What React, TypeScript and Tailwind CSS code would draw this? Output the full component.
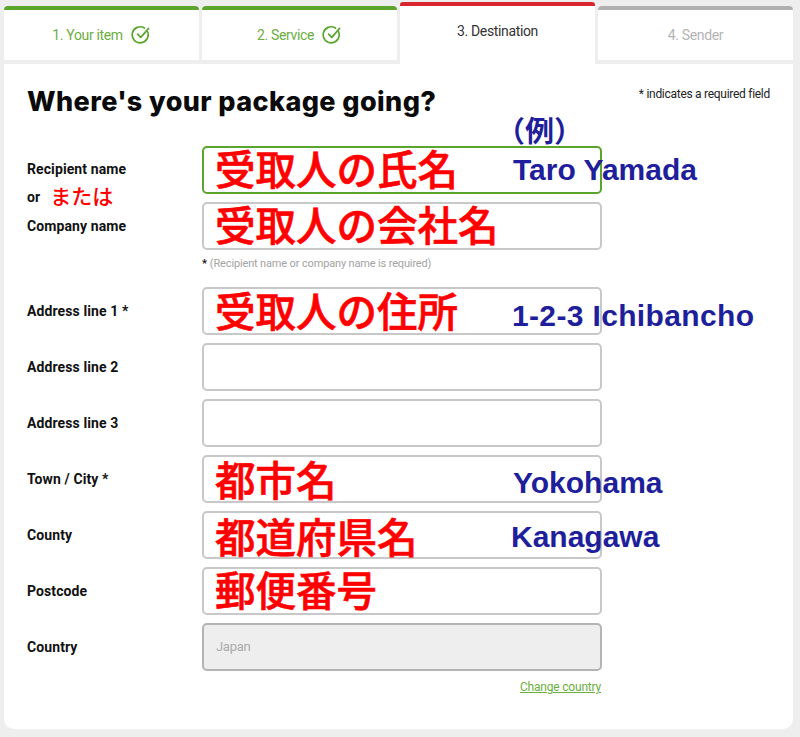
import { Fragment, ReactNode } from "react";

const din = "font-['Roboto','Liberation_Sans',sans-serif]";
const red = "font-['Noto_Sans_CJK_JP',sans-serif] font-medium [-webkit-text-stroke:0.6px_#ff0000] text-[40.5px] leading-[48px] text-[#ff0000] whitespace-nowrap";
const blue = "absolute font-['Liberation_Sans','Noto_Sans_CJK_JP',sans-serif] font-bold text-[#1f1f9c] whitespace-nowrap";

function Check() {
  return (
    <svg width="20" height="20" viewBox="0 0 20 20" fill="none" stroke="#5ba52e" strokeWidth="1.7" strokeLinecap="round" strokeLinejoin="round">
      <path d="M16.6 6.8A8 8 0 1 1 13.4 3" />
      <path d="M6.6 9.2l3.2 3.2 7.8-9" />
    </svg>
  );
}

const steps = [
  { label: "1. Your item", state: "done" },
  { label: "2. Service", state: "done" },
  { label: "3. Destination", state: "active" },
  { label: "4. Sender", state: "todo" },
];

function Tabs() {
  return (
    <div className={`flex gap-[3px] items-end h-[64px] pl-[4px] pr-[7px] ${din}`}>
      {steps.map((s) => {
        if (s.state === "active") {
          return (
            <div key={s.label} className="flex-1 h-[62px] pt-[16px] bg-white border-t-[4px] border-[#d9262e] rounded-t-[3px] text-center text-[14px] tracking-[-0.35px] leading-[18px] text-[#333]">
              {s.label}
            </div>
          );
        }
        const done = s.state === "done";
        return (
          <div key={s.label} className={`flex-1 h-[54px] mb-[4px] bg-white border-t-[4px] rounded-t-[4px] flex items-center justify-center gap-[8px] text-[14px] tracking-[-0.35px] ${done ? "border-[#5ba52e] text-[#6cae40]" : "border-[#b0b0b0] text-[#b4b4b4]"}`}>
            <span>{s.label}</span>
            {done && <Check />}
          </div>
        );
      })}
    </div>
  );
}

function Label({ children, className = "" }: { children: ReactNode; className?: string }) {
  return <div className={`text-[14px] leading-[18px] tracking-[0.1px] font-bold text-[#111] ${din} ${className}`}>{children}</div>;
}

function Box({ ja, en, focus, enClass = "", jaClass = "-mt-[4px]" }: { ja?: string; en?: string; focus?: boolean; enClass?: string; jaClass?: string }) {
  return (
    <div className={`relative w-[400px] h-[48px] bg-white border-2 rounded-[5px] pl-[11px] ${focus ? "border-[#5ba52e]" : "border-[#c8c8c8]"}`}>
      {ja && <div className={`${red} ${jaClass}`}>{ja}</div>}
      {en && <div className={`${blue} ${enClass}`}>{en}</div>}
    </div>
  );
}

const rows = [
  { label: "Address line 1 *", ja: "受取人の住所", jaClass: "-mt-[3px]", en: "1-2-3 Ichibancho", enClass: "left-[308px] top-[3px] text-[30px] tracking-[0.35px] leading-[48px]" },
  { label: "Address line 2" },
  { label: "Address line 3" },
  { label: "Town / City *", ja: "都市名", jaClass: "-mt-[2px]", en: "Yokohama", enClass: "left-[309px] top-[2px] text-[30px] leading-[48px]" },
  { label: "County", ja: "都道府県名", jaClass: "-mt-[1px]", en: "Kanagawa", enClass: "left-[307px] top-[0px] text-[30px] leading-[48px]" },
  { label: "Postcode", ja: "郵便番号", jaClass: "-mt-[4px]" },
];

export default function App() {
  return (
    <div className="w-[800px] h-[737px] bg-[#eeeeee] overflow-hidden">
      <Tabs />
      <div className="ml-[4px] w-[789px] h-[665px] bg-white rounded-b-[10px] pl-[23px] relative">
        <div className="flex justify-between pr-[23px] pt-[20px] h-[82px]">
          <h1 className="font-['Inter',sans-serif] font-extrabold text-[27px] tracking-[0.4px] leading-[36px] text-[#0a0a0a]">Where's your package going?</h1>
          <p className={`${din} text-[12px] tracking-[-0.28px] leading-[18px] mt-[1px] text-[#222]`}>* indicates a required field</p>
        </div>

        <div className="grid grid-cols-[175px_400px] gap-y-[8px]">
          <div className="row-span-2">
            <Label className="mt-[14px]">Recipient name</Label>
            <Label className="mt-[6px] flex items-center h-[26px]">
              <span>or</span>
              <span className="ml-[10px] -mt-[4px] tracking-normal font-['Noto_Sans_CJK_JP',sans-serif] font-medium text-[21px] text-[#ff0000]">または</span>
            </Label>
            <Label className="mt-[7px]">Company name</Label>
          </div>
          <div className="relative">
            <div className={`${blue} left-[294px] -top-[36px] text-[29px] leading-[38px] font-['Noto_Sans_CJK_JP',sans-serif]`}>（例）</div>
            <Box ja="受取人の氏名" en="Taro Yamada" focus enClass="left-[309px] top-[-2px] text-[30px] leading-[48px]" />
          </div>
          <Box ja="受取人の会社名" />

          <div />
          <p className={`${din} text-[11px] tracking-[-0.15px] leading-[14px] -mt-[1px] h-[22px] text-[#a3a3a3]`}>
            <b className="text-[#111] mr-[3px]">*</b>(Recipient name or company name is required)
          </p>

          {rows.map((r) => (
            <Fragment key={r.label}>
              <Label className="self-center">{r.label}</Label>
              <Box ja={r.ja} jaClass={r.jaClass} en={r.en} enClass={r.enClass} />
            </Fragment>
          ))}

          <Label className="self-center">Country</Label>
          <div className={`w-[400px] h-[48px] bg-[#eeeeee] border-2 border-[#b4b4b4] rounded-[5px] pl-[12px] flex items-center text-[13px] tracking-[-0.3px] text-[#ababab] ${din}`}>Japan</div>

          <div />
          <div className={`text-right pr-[1px] text-[12px] tracking-[-0.2px] leading-[16px] underline text-[#6cae40] ${din}`}>Change country</div>
        </div>
      </div>
    </div>
  );
}
